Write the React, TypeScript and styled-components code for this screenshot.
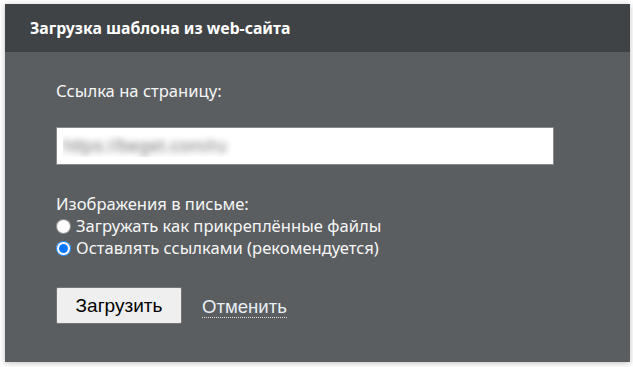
import React from "react";
import styled, { createGlobalStyle } from "styled-components";

const Global = createGlobalStyle`
  html, body { margin: 0; padding: 0; background: #fff; }
  body { font-family: "Noto Sans", "Open Sans", sans-serif; }
`;

const Page = styled.div`
  padding: 4px 3px 5px 5px;
`;

const Dialog = styled.div`
  width: 625px;
  height: 358px;
  background: #5a5e61;
  box-shadow: 0 1px 6px rgba(0, 0, 0, 0.25);
  display: flex;
  flex-direction: column;
`;

const Header = styled.div`
  height: 48px;
  flex: none;
  background: #3f4346;
  color: #fff;
  font-family: "Noto Sans", sans-serif;
  font-weight: 700;
  font-size: 15.8px;
  display: flex;
  align-items: center;
  padding-left: 25px;
`;

const Body = styled.div`
  padding: 28px 51px 0;
  color: #f6f6f6;
  font-family: "Noto Sans", sans-serif;
  font-size: 16.6px;
  line-height: 22px;
  display: flex;
  flex-direction: column;
`;

const Label = styled.div``;

const UrlInput = styled.input`
  box-sizing: border-box;
  width: 498px;
  height: 38px;
  margin-top: 25px;
  border: 1px solid #8a8a8a;
  background: #fff;
  padding: 0 6px;
  font-family: "Liberation Sans", sans-serif;
  font-size: 18.5px;
  color: transparent;
  text-shadow: 0 0 6px rgba(0, 0, 0, 0.5);
  outline: none;
`;

const Group = styled.div`
  margin-top: 28px;
  display: flex;
  flex-direction: column;
`;

const RadioRow = styled.label`
  display: flex;
  align-items: center;
  height: 22px;
`;

const Radio = styled.input`
  width: 15px;
  height: 15px;
  margin: 0 5px 0 0;
`;

const Actions = styled.div`
  margin-top: 28px;
  display: flex;
  align-items: center;
  gap: 20px;
`;

const Button = styled.button`
  box-sizing: border-box;
  width: 126px;
  height: 37px;
  background: #efefef;
  border: 1px solid #767676;
  border-radius: 2px;
  font-family: "Liberation Sans", Arial, sans-serif;
  font-size: 19px;
  color: #000;
  padding: 0;
`;

const CancelLink = styled.a`
  font-family: "Liberation Sans", Arial, sans-serif;
  font-size: 18.6px;
  color: #e8eef4;
  text-decoration: none;
  border-bottom: 1px dotted #e0e0e0;
  line-height: 21px;
  margin-top: 2px;
  cursor: pointer;
`;

export default function App() {
  return (
    <>
      <Global />
      <Page>
        <Dialog>
          <Header>Загрузка шаблона из web-сайта</Header>
          <Body>
            <Label>Ссылка на страницу:</Label>
            <UrlInput defaultValue="https://beget.com/ru" />
            <Group>
              <Label>Изображения в письме:</Label>
              <RadioRow>
                <Radio type="radio" name="img" />
                Загружать как прикреплённые файлы
              </RadioRow>
              <RadioRow>
                <Radio type="radio" name="img" defaultChecked />
                Оставлять ссылками (рекомендуется)
              </RadioRow>
            </Group>
            <Actions>
              <Button>Загрузить</Button>
              <CancelLink>Отменить</CancelLink>
            </Actions>
          </Body>
        </Dialog>
      </Page>
    </>
  );
}
